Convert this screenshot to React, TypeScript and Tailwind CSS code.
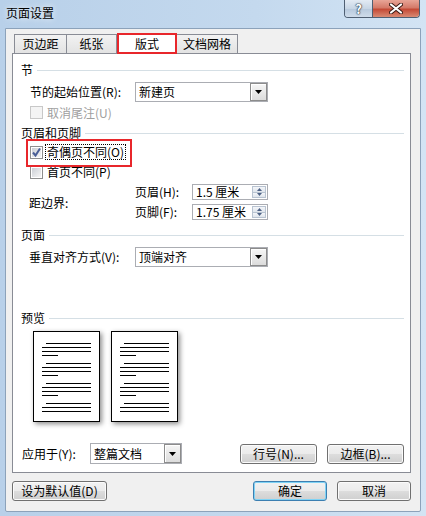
import React from 'react';

const btnFace =
  'bg-[linear-gradient(#f2f2f2_0%,#ebebeb_50%,#dddddd_51%,#cfcfcf_100%)]';

function Select({ value, className }: { value: string; className: string }) {
  return (
    <div className={`flex items-stretch border border-[#abadb3] bg-white ${className}`}>
      <div className="flex-1 flex items-center pl-[3px] leading-none">{value}</div>
      <div className="w-[17px] flex items-center justify-center border border-[#8c8c8c] bg-[linear-gradient(#f6f6f6,#dcdcdc)] shadow-[inset_1px_1px_0_#ffffff]">
        <svg width="7" height="4" viewBox="0 0 7 4">
          <path d="M0 0h7L3.5 4z" fill="#000" />
        </svg>
      </div>
    </div>
  );
}

function Spin({ value }: { value: string }) {
  return (
    <div className="flex items-stretch w-[76px] h-[16px] border border-[#abadb3] bg-white">
      <div className="flex-1 flex items-center pl-[3px] leading-none">{value}</div>
      <div className="w-[14px] my-[1px] mr-[1px] flex flex-col">
        <div className="flex-1 flex items-center justify-center border border-[#b8c3d1] bg-[linear-gradient(#f4f6f9,#dfe5ec)]">
          <svg width="5" height="3" viewBox="0 0 5 3">
            <path d="M0 3h5L2.5 0z" fill="#4d6185" />
          </svg>
        </div>
        <div className="flex-1 flex items-center justify-center border border-t-0 border-[#b8c3d1] bg-[linear-gradient(#f4f6f9,#dfe5ec)]">
          <svg width="5" height="3" viewBox="0 0 5 3">
            <path d="M0 0h5L2.5 3z" fill="#4d6185" />
          </svg>
        </div>
      </div>
    </div>
  );
}

function Checkbox({ checked = false, disabled = false }: { checked?: boolean; disabled?: boolean }) {
  return (
    <div
      className={`w-[13px] h-[13px] border flex items-center justify-center ${
        disabled ? 'border-[#c8c8c8] bg-[#f4f4f4]' : 'border-[#8e8f8f] bg-white'
      }`}
    >
      <div
        className={`w-[9px] h-[9px] relative ${
          disabled ? 'bg-[#f4f4f4]' : 'bg-[linear-gradient(135deg,#cbcfd5,#f6f6f6)]'
        }`}
      >
        {checked && (
          <svg width="11" height="11" viewBox="0 0 11 11" className="absolute -left-[1px] -top-[1px]">
            <path d="M2 5.5l2.5 3L9 1.5" stroke="#4a5f97" strokeWidth="2" fill="none" />
          </svg>
        )}
      </div>
    </div>
  );
}

function Button({ label, className, isDefault = false }: { label: string; className: string; isDefault?: boolean }) {
  return (
    <div
      className={`h-[20px] flex items-center justify-center rounded-[3px] border leading-none ${btnFace} ${
        isDefault
          ? 'border-[#3c7fb1] shadow-[inset_0_0_0_1px_#7fd3f5]'
          : 'border-[#707070] shadow-[inset_0_0_0_1px_#fbfbfb]'
      } ${className}`}
    >
      {label}
    </div>
  );
}

function Section({ title, className }: { title: string; className: string }) {
  return (
    <div className={`flex items-center h-[16px] pl-[8px] pr-[6px] ${className}`}>
      <span className="leading-none">{title}</span>
      <div className="flex-1 h-px bg-[#d5dfe5] ml-[4px]" />
    </div>
  );
}

function PreviewPage() {
  const groups = [12, 32, 52, 72];
  return (
    <div className="w-[67px] h-[91px] bg-white border border-black shadow-[2px_2px_5px_rgba(0,0,0,0.45)]">
      <svg width="65" height="89" viewBox="0 0 65 89">
        {groups.map((g, i) => (
          <g key={g} fill="#000">
            <rect x={12} y={g - 1} width={45} height={1} />
            <rect x={8} y={g + 3} width={49} height={1} />
            <rect x={8} y={g + 7} width={49} height={1} />
            {i < 3 && <rect x={8} y={g + 11} width={16} height={1} />}
          </g>
        ))}
      </svg>
    </div>
  );
}

export default function App() {
  return (
    <div className="relative w-[426px] h-[516px] overflow-hidden bg-[linear-gradient(90deg,#b8d0e9,#c4d9ee_60%,#d3e4f4)] text-[12px] text-black font-['Noto_Sans_CJK_SC',sans-serif]">
      {/* title bar */}
      <div className="h-[28px] pl-[6px] pt-[6px] leading-[14px] [text-shadow:0_0_6px_#ffffff]">页面设置</div>
      <div className="absolute top-0 right-[6px] flex h-[18px] border border-t-0 border-[#4f5f72] rounded-b-[4px] overflow-hidden">
        <div className="w-[28px] flex items-center justify-center bg-[linear-gradient(#e3ebf4,#c8d6e5_50%,#b6c8dc_51%,#cfdcea)] border-r border-[#4f5f72] text-white font-bold text-[13px] leading-none [text-shadow:0_0_1px_#2a3642,0_0_1px_#2a3642,0_0_2px_#2a3642]">
          ?
        </div>
        <div className="w-[46px] flex items-center justify-center bg-[linear-gradient(#e8a597,#d47a69_45%,#c44a36_55%,#d98a73)]">
          <svg width="14" height="11" viewBox="0 0 14 11">
            <path d="M2 1.5l10 8M12 1.5l-10 8" stroke="#3a1a14" strokeWidth="4" strokeLinecap="round" />
            <path d="M2 1.5l10 8M12 1.5l-10 8" stroke="#ffffff" strokeWidth="2.2" strokeLinecap="round" />
          </svg>
        </div>
      </div>

      {/* client area */}
      <div className="ml-[5px] w-[416px] h-[484px] border border-[#8ca2ba] rounded-b-[2px] bg-[#f0f0f0] flex flex-col">
        {/* tabs */}
        <div className="ml-[6px] pl-[2px] mt-[4px] h-[20px] flex items-end relative z-10">
          <div className="w-[53px] h-[19px] flex items-center justify-center border border-b-0 border-[#898c95] bg-[linear-gradient(#f2f2f2,#e3e3e3)] leading-none">
            页边距
          </div>
          <div className="w-[50px] h-[19px] flex items-center justify-center border border-b-0 border-l-0 border-[#898c95] bg-[linear-gradient(#f2f2f2,#e3e3e3)] leading-none">
            纸张
          </div>
          <div className="w-[60px] h-[21px] -mb-[1px] flex items-center justify-center border-2 border-[#e8262b] bg-white leading-none">
            版式
          </div>
          <div className="w-[61px] h-[19px] flex items-center justify-center border border-b-0 border-l-0 border-[#898c95] bg-[linear-gradient(#f2f2f2,#e3e3e3)] leading-none">
            文档网格
          </div>
        </div>

        {/* panel */}
        <div className="ml-[6px] w-[399px] h-[420px] border border-[#898c95] bg-white flex flex-col">
          <Section title="节" className="mt-[8px]" />
          <div className="mt-[4px] h-[20px] pl-[17px] flex items-center">
            <div className="w-[105px] leading-none">节的起始位置(R):</div>
            <Select value="新建页" className="w-[133px] h-[20px]" />
          </div>
          <div className="mt-[3px] h-[15px] pl-[17px] flex items-center gap-[4px] text-[#a0a0a0]">
            <Checkbox disabled />
            <span className="leading-none">取消尾注(U)</span>
          </div>

          <Section title="页眉和页脚" className="mt-[5px]" />
          <div className="relative mt-[3px] h-[16px] pl-[17px] flex items-center gap-[3px]">
            <Checkbox checked />
            <span className="leading-[12px] px-[1px] py-[1px] outline-1 outline-dotted outline-black">奇偶页不同(O)</span>
            <div className="absolute left-[13px] -top-[5px] w-[106px] h-[28px] border-2 border-[#e8262b]" />
          </div>
          <div className="mt-[4px] h-[16px] pl-[17px] flex items-center gap-[4px]">
            <Checkbox />
            <span className="leading-none">首页不同(P)</span>
          </div>
          <div className="mt-[4px] h-[36px] pl-[16px] flex items-center">
            <div className="w-[106px] leading-none pt-[1px]">距边界:</div>
            <div className="flex flex-col gap-[4px]">
              <div className="flex items-center">
                <div className="w-[57px] leading-none">页眉(H):</div>
                <Spin value="1.5 厘米" />
              </div>
              <div className="flex items-center">
                <div className="w-[57px] leading-none">页脚(F):</div>
                <Spin value="1.75 厘米" />
              </div>
            </div>
          </div>

          <Section title="页面" className="mt-[7px]" />
          <div className="mt-[4px] h-[20px] pl-[16px] flex items-center">
            <div className="w-[106px] leading-none">垂直对齐方式(V):</div>
            <Select value="顶端对齐" className="w-[133px] h-[20px]" />
          </div>

          <Section title="预览" className="mt-[43px]" />
          <div className="mt-[5px] pl-[20px] flex gap-[11px]">
            <PreviewPage />
            <PreviewPage />
          </div>

          <div className="mt-[21px] h-[21px] pl-[9px] pr-[6px] flex items-center">
            <div className="w-[68px] leading-none">应用于(Y):</div>
            <Select value="整篇文档" className="w-[92px] h-[21px]" />
            <div className="ml-auto flex gap-[10px]">
              <Button label="行号(N)..." className="w-[77px]" />
              <Button label="边框(B)..." className="w-[77px]" />
            </div>
          </div>
        </div>

        {/* bottom buttons */}
        <div className="mt-[8px] pl-[6px] pr-[9px] flex items-center">
          <Button label="设为默认值(D)" className="w-[95px]" />
          <div className="ml-auto flex gap-[10px]">
            <Button label="确定" className="w-[74px]" isDefault />
            <Button label="取消" className="w-[74px]" />
          </div>
        </div>
      </div>
    </div>
  );
}
